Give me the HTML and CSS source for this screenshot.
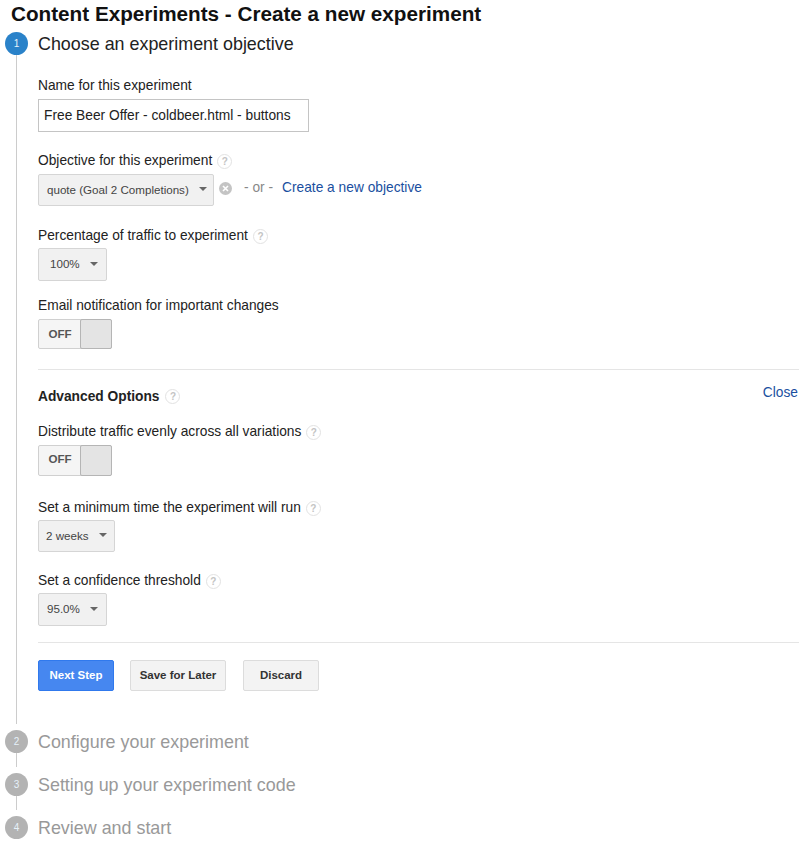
FILE: index.html
```html
<!DOCTYPE html>
<html>
<head>
    <title>Content Experiments</title>
    <link rel="stylesheet" href="styles.css">
</head>
<body>
    <h1 class="page-title">Content Experiments - Create a new experiment</h1>

    <div class="step step-active">
        <div class="rail">
            <div class="step-num">1</div>
            <div class="rail-line"></div>
        </div>
        <div class="step-body">
            <h2 class="step-title">Choose an experiment objective</h2>

            <div class="field field-name">
                <div class="field-label">Name for this experiment</div>
                <input type="text" class="text-input" value="Free Beer Offer - coldbeer.html - buttons">
            </div>

            <div class="field field-objective">
                <div class="field-label">Objective for this experiment <span class="help">?</span></div>
                <div class="objective-row">
                    <div class="select select-objective">quote (Goal 2 Completions)<span class="caret"></span></div>
                    <svg class="clear-icon" width="13" height="13" viewBox="0 0 13 13">
                        <circle cx="6.5" cy="6.5" r="6.5" fill="#c4c4c4"/>
                        <path d="M4 4l5 5M9 4l-5 5" stroke="#fff" stroke-width="1.6"/>
                    </svg>
                    <span class="or-text">- or -</span>
                    <a href="#" class="link link-objective">Create a new objective</a>
                </div>
            </div>

            <div class="field field-traffic">
                <div class="field-label label-close">Percentage of traffic to experiment <span class="help">?</span></div>
                <div class="select select-traffic">100%<span class="caret"></span></div>
            </div>

            <div class="field field-email">
                <div class="field-label">Email notification for important changes</div>
                <div class="toggle">
                    <span class="toggle-text">OFF</span>
                    <span class="toggle-knob"></span>
                </div>
            </div>

            <hr class="divider">

            <div class="advanced-head">
                <div class="advanced-title">Advanced Options <span class="help">?</span></div>
                <a href="#" class="link link-close">Close</a>
            </div>

            <div class="field field-distribute">
                <div class="field-label">Distribute traffic evenly across all variations <span class="help">?</span></div>
                <div class="toggle toggle-tall">
                    <span class="toggle-text">OFF</span>
                    <span class="toggle-knob"></span>
                </div>
            </div>

            <div class="field field-time">
                <div class="field-label label-close">Set a minimum time the experiment will run <span class="help">?</span></div>
                <div class="select select-time">2 weeks<span class="caret"></span></div>
            </div>

            <div class="field field-confidence">
                <div class="field-label label-close">Set a confidence threshold <span class="help">?</span></div>
                <div class="select select-confidence">95.0%<span class="caret"></span></div>
            </div>

            <hr class="divider divider-bottom">

            <div class="buttons">
                <button class="btn btn-primary">Next Step</button>
                <button class="btn btn-save">Save for Later</button>
                <button class="btn btn-discard">Discard</button>
            </div>
        </div>
    </div>

    <div class="step step-off">
        <div class="rail">
            <div class="step-num">2</div>
            <div class="rail-line"></div>
        </div>
        <h2 class="step-title">Configure your experiment</h2>
    </div>
    <div class="step step-off">
        <div class="rail">
            <div class="step-num">3</div>
            <div class="rail-line"></div>
        </div>
        <h2 class="step-title">Setting up your experiment code</h2>
    </div>
    <div class="step step-off step-last">
        <div class="rail">
            <div class="step-num">4</div>
        </div>
        <h2 class="step-title">Review and start</h2>
    </div>
</body>
</html>
```

FILE: styles.css
```css
body {
    margin: 0;
    background-color: #fff;
    color: #222;
    font-family: "Liberation Sans", Arial, sans-serif;
    font-size: 13.75px;
}

.page-title {
    margin: 0;
    padding: 2px 0 0 11px;
    height: 30px;
    box-sizing: border-box;
    font-size: 20.7px;
    line-height: 23px;
    font-weight: bold;
    color: #111;
}

/* steps */
.step {
    display: flex;
    padding-left: 5px;
}
.step-active {
    height: 698px;
}
.step-off {
    height: 43px;
}
.step-last {
    height: 28px;
}
.rail {
    width: 23px;
    margin-right: 10px;
    padding-top: 2px;
    box-sizing: border-box;
    display: flex;
    flex-direction: column;
    align-items: center;
    flex-shrink: 0;
}
.step-num {
    width: 23px;
    height: 23px;
    border-radius: 50%;
    background-color: #2a82c9;
    color: #e6f1fa;
    font-size: 10px;
    line-height: 23px;
    text-align: center;
    flex-shrink: 0;
}
.rail-line {
    width: 1px;
    flex: 1;
    margin-bottom: 4px;
    background-color: #ccc;
}
.step-off .step-num {
    background-color: #b3b3b3;
}
.step-body {
    flex: 1;
    min-width: 0;
    padding-right: 11px;
}
.step-title {
    margin: 0;
    font-size: 17.9px;
    font-weight: normal;
    line-height: 29px;
    height: 29px;
    color: #222;
}
.step-off .step-title {
    color: #999;
}

/* form fields */
.field-label {
    display: flex;
    align-items: center;
    gap: 5px;
    height: 16px;
    box-sizing: border-box;
    padding-top: 2px;
    line-height: 16px;
    margin-bottom: 6px;
}
.label-close {
    margin-bottom: 5px;
}
.field-name {
    margin-top: 18px;
}
.field-objective {
    margin-top: 20px;
}
.field-traffic {
    margin-top: 21px;
}
.field-email {
    margin-top: 16px;
}
.field-distribute {
    margin-top: 19px;
}
.field-time {
    margin-top: 23px;
}
.field-confidence {
    margin-top: 20px;
}
.help {
    display: inline-block;
    width: 15px;
    height: 15px;
    box-sizing: border-box;
    border: 1px solid #e2e2e2;
    border-radius: 50%;
    color: #c4c4c4;
    font-size: 10px;
    font-weight: bold;
    line-height: 13px;
    text-align: center;
}
.text-input {
    display: block;
    width: 271px;
    height: 33px;
    box-sizing: border-box;
    padding: 0 5px;
    border: 1px solid #c4c4c4;
    font-family: inherit;
    font-size: 13.75px;
    color: #222;
    outline: none;
}
.objective-row {
    display: flex;
    align-items: center;
}
.select {
    display: flex;
    align-items: center;
    box-sizing: border-box;
    height: 33px;
    padding-bottom: 2px;
    border: 1px solid #d5d5d5;
    border-radius: 2px;
    background-color: #f1f1f1;
    color: #444;
    font-size: 11.6px;
}
.select-objective {
    width: 176px;
    height: 32px;
    padding-left: 8px;
}
.select-traffic {
    width: 69px;
    padding-left: 11px;
}
.select-time {
    width: 77px;
    height: 32px;
    padding-left: 7px;
}
.select-confidence {
    width: 69px;
    padding-left: 8px;
}
.caret {
    margin-left: 10px;
    width: 0;
    height: 0;
    border-left: 4px solid transparent;
    border-right: 4px solid transparent;
    border-top: 4px solid #666;
}
.clear-icon {
    margin: 0 12px 3px 5px;
}
.or-text {
    color: #888;
    margin: 0 9px 6px 0;
}
.link {
    color: #1a4fa0;
    text-decoration: none;
}
.link-objective {
    margin-bottom: 6px;
}

/* on/off switch */
.toggle {
    display: flex;
    width: 74px;
    height: 30px;
    box-sizing: border-box;
    border: 1px solid #d0d0d0;
    border-radius: 2px;
    background-color: #f5f5f5;
}
.toggle-tall {
    height: 31px;
}
.toggle-text {
    width: 42px;
    text-align: center;
    font-size: 11.6px;
    font-weight: bold;
    line-height: 27px;
    color: #555;
}
.toggle-tall .toggle-text {
    line-height: 26px;
}
.toggle-knob {
    flex: 1;
    margin: -1px;
    border: 1px solid #b5b5b5;
    border-radius: 2px;
    background-color: #e4e4e4;
}

.divider {
    margin: 20px 0 0;
    border: none;
    border-top: 1px solid #e5e5e5;
}
.divider-bottom {
    margin-top: 16px;
}
.advanced-head {
    display: flex;
    justify-content: space-between;
    height: 16px;
    margin-top: 18px;
}
.advanced-title {
    display: flex;
    align-items: center;
    gap: 6px;
    height: 16px;
    font-weight: bold;
}
.link-close {
    line-height: 16px;
    margin-top: -3px;
    margin-right: 1px;
}

.buttons {
    display: flex;
    margin-top: 17px;
}
.btn {
    height: 31px;
    box-sizing: border-box;
    border: 1px solid #dcdcdc;
    border-radius: 2px;
    background-color: #f3f3f3;
    color: #333;
    font-family: inherit;
    font-size: 11.5px;
    font-weight: bold;
    padding: 0 0 2px;
}
.btn-primary {
    width: 76px;
    margin-right: 16px;
    border-color: #3079ed;
    background-color: #4687f0;
    color: #fff;
}
.btn-save {
    width: 96px;
    margin-right: 17px;
}
.btn-discard {
    width: 76px;
}
```
